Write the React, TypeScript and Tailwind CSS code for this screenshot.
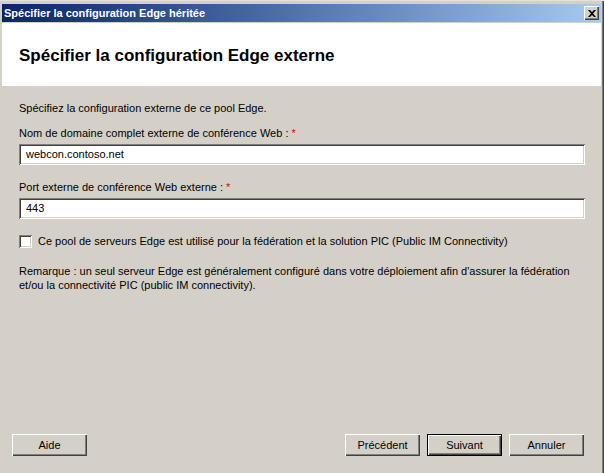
import React from "react";

const font = { fontFamily: '"Liberation Sans", Arial, sans-serif' };

const Raised: React.FC<{ label: string; isDefault?: boolean; className?: string }> = ({ label, isDefault, className }) => (
    <button
        className={
            "h-[22px] w-[75px] bg-[#d4d0c8] text-[11px] text-black " +
            (isDefault
                ? "border border-black shadow-[inset_1px_1px_#fff,inset_-1px_-1px_#404040,inset_-2px_-2px_#808080] "
                : "shadow-[inset_1px_1px_#fff,inset_-1px_-1px_#404040,inset_-2px_-2px_#808080] ") +
            (className ?? "")
        }
    >
        {label}
    </button>
);

const Field: React.FC<{ value: string }> = ({ value }) => (
    <div className="h-[21px] w-[566px] bg-white shadow-[inset_1px_1px_#808080,inset_-1px_-1px_#fff,inset_2px_2px_#404040,inset_-2px_-2px_#d4d0c8] flex items-center pl-[7px] text-[11px] text-black">
        {value}
    </div>
);

export default function App() {
    return (
        <div
            className="w-[604px] h-[473px] bg-[#d4d0c8] flex flex-col pt-[3px] pl-[2px] pr-[3px] border-t border-[#e4e2dc] shadow-[inset_-1px_0_#404040,inset_-2px_0_#808080] overflow-hidden"
            style={font}
        >
            {/* TITLE BAR */}
            <div className="h-[18px] shrink-0 bg-gradient-to-r from-[#0a246a] to-[#a6caf0] flex items-center justify-between pl-[2px] pr-[2px]">
                <span className="text-[11px] font-bold text-white leading-none">Spécifier la configuration Edge héritée</span>
                <div className="w-[15px] h-[14px] bg-[#d4d0c8] shadow-[inset_1px_1px_#fff,inset_-1px_-1px_#404040,inset_-2px_-2px_#808080] flex items-center justify-center">
                    <svg width="8" height="7" viewBox="0 0 8 7">
                        <path d="M0 0h2l2 2 2-2h2L5 3.5 8 7H6L4 5 2 7H0l3-3.5z" fill="#000" />
                    </svg>
                </div>
            </div>

            {/* HEADER */}
            <div className="h-[63px] shrink-0 bg-white mt-[1px] flex items-center pl-[17px]">
                <h1 className="text-[17px] font-bold text-black tracking-[0px] pt-[2px]">
                    Spécifier la configuration Edge externe
                </h1>
            </div>

            {/* BODY */}
            <div className="flex-1 flex flex-col pl-[17px] pt-[16px] text-[11px] text-black leading-[13px]">
                <p>Spécifiez la configuration externe de ce pool Edge.</p>

                <p className="mt-[12px]">
                    Nom de domaine complet externe de conférence Web : <span className="text-[#e00000]">*</span>
                </p>
                <div className="mt-[4px]">
                    <Field value="webcon.contoso.net" />
                </div>

                <p className="mt-[16px]">
                    Port externe de conférence Web externe : <span className="text-[#e00000]">*</span>
                </p>
                <div className="mt-[4px]">
                    <Field value="443" />
                </div>

                <label className="mt-[16px] flex items-center gap-[6px]">
                    <span className="w-[13px] h-[13px] bg-white shadow-[inset_1px_1px_#808080,inset_-1px_-1px_#fff,inset_2px_2px_#404040,inset_-2px_-2px_#d4d0c8]" />
                    <span>Ce pool de serveurs Edge est utilisé pour la fédération et la solution PIC (Public IM Connectivity)</span>
                </label>

                <p className="mt-[16px] leading-[14px] w-[570px]">
                    Remarque : un seul serveur Edge est généralement configuré dans votre déploiement afin d'assurer la fédération
                    et/ou la connectivité PIC (public IM connectivity).
                </p>

                {/* FOOTER */}
                <div className="mt-auto mb-[17px] -ml-[7px] flex items-center">
                    <Raised label="Aide" />
                    <div className="ml-auto mr-[17px] flex gap-[7px]">
                        <Raised label="Précédent" />
                        <Raised label="Suivant" isDefault />
                        <Raised label="Annuler" />
                    </div>
                </div>
            </div>
        </div>
    );
}
